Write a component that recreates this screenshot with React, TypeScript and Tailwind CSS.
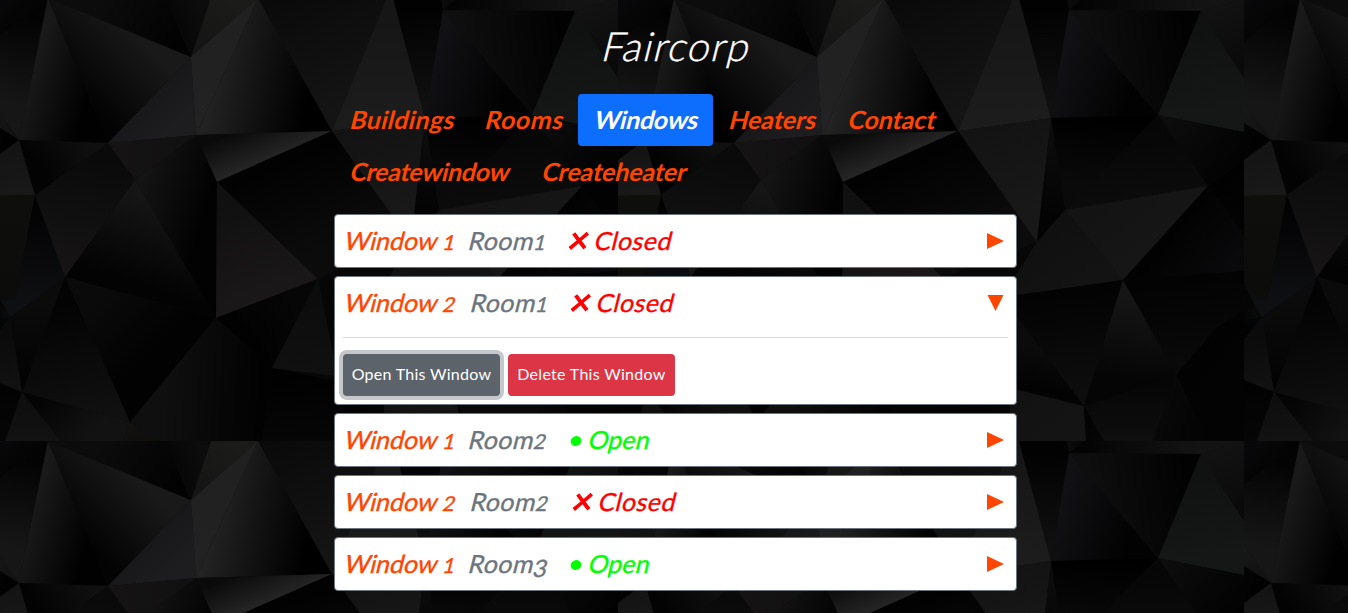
import React from "react";

type Facet = [points: string, from: string, to: string, x1: number, y1: number, x2: number, y2: number];

const TILE_W = 626;
const TILE_H = 443;

const facets: Facet[] = [
  ["-8,-2 48,-2 -8,42", "#08080a", "#040404", 0, 0, 20, 20],
  ["48,-2 -8,42 -8,103 19,140", "#030303", "#161616", 20, 15, -2, 100],
  ["-8,103 19,140 -8,123", "#181818", "#101010", -8, 105, 19, 138],
  ["-8,123 19,140 -8,160", "#040404", "#010101", -8, 125, 19, 140],
  ["-8,160 19,140 35,195 -8,196", "#141414", "#181818", 0, 150, 10, 195],
  ["-8,196 35,195 15,300 -1,300 -8,285", "#0e0e0c", "#0c0c0b", 0, 196, 0, 290],
  ["35,195 65,277 33,305 10,317 -1,300 15,300", "#020203", "#0e0f12", 35, 205, 30, 300],
  ["48,-2 19,140 108,143", "#191919", "#010101", 30, 80, 88, 98],
  ["48,-2 108,143 191,57", "#030303", "#191919", 82, 95, 140, 38],
  ["108,143 191,57 196,135", "#17171a", "#1d1d20", 150, 90, 180, 120],
  ["48,-2 191,57 165,-2", "#0c0c0c", "#020202", 100, 0, 175, 48],
  ["165,-2 191,57 211,-2", "#050505", "#0c0c0c", 168, 20, 200, 10],
  ["211,-2 191,57 258,-2", "#1b1b19", "#151515", 230, 0, 200, 45],
  ["258,-2 191,57 196,135", "#202020", "#222222", 230, 20, 195, 120],
  ["258,-2 196,135 332,131", "#222222", "#000000", 210, 100, 303, 120],
  ["258,-2 332,131 387,-2", "#0a0a0a", "#141414", 275, 0, 325, 115],
  ["19,140 108,143 35,195", "#101010", "#030303", 90, 143, 45, 175],
  ["108,143 135,180 65,277 35,195", "#0a0a0a", "#161414", 85, 155, 65, 270],
  ["108,143 196,135 135,180", "#151313", "#121112", 110, 145, 180, 140],
  ["196,135 217,182 216,318 135,180", "#151415", "#020202", 143, 175, 210, 195],
  ["135,180 216,318 65,277", "#151515", "#030303", 135, 195, 110, 275],
  ["196,135 332,131 217,182", "#0a0a0a", "#242424", 240, 130, 254, 164],
  ["332,131 217,182 318,279 411,242", "#020202", "#0b0b0b", 280, 165, 315, 250],
  ["217,182 318,279 216,318", "#111011", "#191717", 225, 205, 260, 290],
  ["65,277 216,318 130,422 75,300", "#0a0a0a", "#020202", 90, 305, 145, 360],
  ["65,277 75,300 130,422 22,392", "#030303", "#101010", 70, 300, 95, 415],
  ["65,277 22,392 10,317", "#0b0b0b", "#030303", 35, 300, 38, 380],
  ["10,317 -8,285 -8,320", "#0a0a0a", "#050505", 5, 315, -5, 310],
  ["10,317 -8,320 -8,340", "#020606", "#010303", 5, 320, -5, 330],
  ["10,317 22,392 -8,380 -8,340", "#0b0b0b", "#111111", 0, 340, 10, 385],
  ["-8,380 22,392 5,441 -8,441", "#020202", "#060606", 0, 385, 0, 440],
  ["22,392 5,441 61,441", "#0e0e0e", "#121212", 20, 400, 20, 440],
  ["22,392 61,441 123,441 130,422", "#040404", "#121212", 40, 400, 85, 440],
  ["130,422 123,441 155,441", "#14110f", "#100f0e", 130, 422, 135, 441],
  ["216,318 130,422 155,441 262,441 272,368", "#0f0f0f", "#020202", 165, 395, 260, 400],
  ["216,318 272,368 318,279", "#060606", "#020202", 290, 300, 245, 335],
  ["318,279 272,368 338,376", "#0c0c0c", "#101010", 310, 295, 300, 370],
  ["318,279 338,376 458,406 391,317 391,242", "#060606", "#020202", 350, 300, 380, 385],
  ["272,368 262,441 460,441 458,406", "#010101", "#060606", 300, 375, 310, 441],
  ["387,-2 332,131 425,118 393,-2", "#161616", "#1c1c1c", 375, 20, 380, 115],
  ["332,131 425,118 411,242", "#131313", "#181818", 370, 125, 400, 210],
  ["393,-2 425,118 443,10 441,-2", "#020202", "#101010", 420, 10, 425, 105],
  ["441,-2 443,10 458,-2", "#0c0c0c", "#080808", 442, 0, 450, 0],
  ["458,-2 443,10 575,11 618,-2", "#030303", "#131313", 450, 8, 570, 0],
  ["443,10 425,118 532,115", "#111115", "#020202", 430, 75, 503, 100],
  ["443,10 532,115 575,11", "#0e0e0e", "#020202", 465, 45, 560, 30],
  ["575,11 532,115 618,132 618,78", "#101211", "#151716", 575, 30, 590, 110],
  ["575,11 618,-2 618,78", "#121212", "#090909", 590, 10, 615, 70],
  ["425,118 532,115 439,210", "#000000", "#0a0a0a", 465, 118, 460, 185],
  ["532,115 439,210 582,186", "#060606", "#0b0b0b", 520, 125, 525, 195],
  ["532,115 582,186 618,160 618,132", "#0c0c0c", "#030303", 545, 120, 600, 165],
  ["582,186 618,160 618,235", "#010101", "#030303", 590, 180, 615, 220],
  ["425,118 439,210 411,242", "#0c0c0c", "#030303", 425, 130, 425, 220],
  ["439,210 582,186 497,280", "#131313", "#161616", 460, 215, 500, 270],
  ["439,210 497,280 391,295 384,285 411,242", "#101010", "#131313", 425, 230, 460, 285],
  ["582,186 618,235 618,271 497,280", "#020202", "#09090b", 550, 230, 600, 270],
  ["391,295 497,280 458,406 391,317", "#030303", "#0d0d0d", 440, 295, 450, 390],
  ["497,280 618,271 618,310 590,328 550,375", "#030303", "#090909", 540, 285, 550, 365],
  ["497,280 458,406 550,375", "#151515", "#050505", 497, 300, 490, 378],
  ["391,317 458,406 384,388 384,310", "#0b0b0b", "#030303", 400, 345, 395, 385],
  ["384,388 458,406 460,441 384,441", "#121212", "#141414", 400, 395, 430, 440],
  ["458,406 460,441 478,441", "#020202", "#050505", 459, 410, 470, 440],
  ["458,406 550,375 527,441 478,441", "#060606", "#0e0e0e", 500, 385, 500, 440],
  ["550,375 527,441 582,441", "#080808", "#040404", 535, 420, 570, 430],
  ["590,328 550,375 582,441 618,441 618,310", "#020202", "#030303", 560, 360, 615, 400],
];

function FacetBackdrop() {
  return (
    <svg className="absolute inset-0 h-full w-full" aria-hidden="true">
      <defs>
        {facets.map(([, from, to, x1, y1, x2, y2], i) => (
          <linearGradient key={i} id={`f${i}`} gradientUnits="userSpaceOnUse" x1={x1} y1={y1} x2={x2} y2={y2}>
            <stop offset="0" stopColor={from} />
            <stop offset="1" stopColor={to} />
          </linearGradient>
        ))}
        <clipPath id="tile-clip">
          <rect x="-8" y="-2" width={TILE_W} height={TILE_H} />
        </clipPath>
        <g id="tile" clipPath="url(#tile-clip)">
          <rect x="-8" y="-2" width={TILE_W} height={TILE_H} fill="#070707" />
          {facets.map(([points], i) => (
            <polygon key={i} points={points} fill={`url(#f${i})`} />
          ))}
        </g>
      </defs>
      {[0, 1].map((row) =>
        [0, 1, 2].map((col) => <use key={`${row}-${col}`} href="#tile" x={col * TILE_W} y={row * TILE_H} />),
      )}
    </svg>
  );
}

const slant = "inline-block whitespace-nowrap origin-[0_75%] -skew-x-[14deg]";

const links = [
  { label: "Buildings", box: "w-[135px]", track: "tracking-[0.3px]" },
  { label: "Rooms", box: "w-[109px]", track: "tracking-[0.5px]" },
  { label: "Windows", box: "w-[135px]", track: "tracking-[-0.3px]", active: true },
  { label: "Heaters", box: "w-[119px]", track: "tracking-[-0.1px]" },
  { label: "Contact", box: "w-[120px]", track: "tracking-[-0.1px]" },
  { label: "Createwindow", box: "w-[192px]", track: "tracking-[-0.3px]" },
  { label: "Createheater", box: "w-[178px]", track: "tracking-[-0.15px]" },
];

/* Old-style figure: 1 and 2 sit at x-height, 3 drops below the baseline. */
function Figure({ value }: { value: number }) {
  return value === 3 ? (
    <span className="relative top-[4px] text-[24px] leading-none tracking-normal">3</span>
  ) : (
    <span className="text-[20.5px] leading-none tracking-normal">{value}</span>
  );
}

function Cross() {
  return (
    <svg className="mt-px h-[20px] w-[22px]" viewBox="0 0 22 20" aria-hidden="true">
      <path
        d="M4.2 3.4 L7.2 1.2 L11.6 7 L18.6 0.8 L21 3.6 L13.6 9.8 L18.4 16 L15.4 18.6 L10.6 12.3 L3 18.9 L0.6 16 L8.6 9.4 Z"
        fill="#ff0000"
      />
    </svg>
  );
}

type Pane = { id: number; room: number; open: boolean; expanded?: boolean };

const panes: Pane[] = [
  { id: 1, room: 1, open: false },
  { id: 2, room: 1, open: false, expanded: true },
  { id: 1, room: 2, open: true },
  { id: 2, room: 2, open: false },
  { id: 1, room: 3, open: true },
];

function WindowCard({ id, room, open, expanded }: Pane) {
  return (
    <section className={`rounded border border-[#6c757d] bg-white px-2 ${expanded ? "h-[129px]" : "h-[54px]"}`}>
      <div className="flex h-[52px] items-center pb-[2px] text-[25px] leading-[38px] [-webkit-text-stroke:0.35px_currentColor]">
        <div className={`text-[#ff4500] ${id === 1 ? "w-[124px]" : "w-[126px]"}`}>
          <span className={`${slant} tracking-[-0.05px]`}>
            Window <Figure value={id} />
          </span>
        </div>
        <div className={`text-[#6c757d] ${room === 1 ? "w-[101px]" : "w-[103px]"}`}>
          <span className={`${slant} tracking-[0.45px]`}>
            Room
            <Figure value={room} />
          </span>
        </div>
        {open ? (
          <div className="flex items-center text-[#00ff00]">
            <svg className="mt-[4px] mr-[5px] h-3 w-3" viewBox="0 0 12 12" aria-hidden="true">
              <ellipse cx="6" cy="6" rx="5.4" ry="4.8" transform="rotate(-25 6 6)" fill="#00ff00" />
            </svg>
            <span className={`${slant} tracking-[0.1px]`}>Open</span>
          </div>
        ) : (
          <div className="flex items-center text-[#ff0000]">
            <Cross />
            <span className={`${slant} ml-[3px] tracking-[0.45px]`}>Closed</span>
          </div>
        )}
        <svg className="mt-[2px] mr-[4px] ml-auto h-[18px] w-[17px]" viewBox="0 0 17 18" aria-hidden="true">
          <path d={expanded ? "M0.5 1 H16.5 L8.5 17 Z" : "M0 1 V17 L17 9 Z"} fill="#ff4500" />
        </svg>
      </div>
      {expanded && (
        <>
          <div className="mt-2 h-px bg-[#ffd0bf]" />
          <div className="mt-4 flex gap-2 text-[16px] text-white">
            <button className="h-[42px] w-[157px] rounded bg-[#5c636a] pb-[3px] tracking-[0.28px] whitespace-nowrap ring-4 ring-[#c4c8cb]">
              Open This Window
            </button>
            <button className="h-[42px] w-[167px] rounded bg-[#dc3545] pb-[3px] tracking-[0.3px] whitespace-nowrap">
              Delete This Window
            </button>
          </div>
        </>
      )}
    </section>
  );
}

export default function App() {
  return (
    <div className="relative h-[613px] w-full overflow-hidden bg-black font-['Lato',sans-serif]">
      <FacetBackdrop />
      <main className="relative ml-[334px] w-[683px]">
        <h1 className="flex h-[94px] items-center justify-center pb-[3px] text-[40px] leading-none font-light tracking-[1.3px] text-white [-webkit-text-stroke:0.4px_currentColor]">
          <span className={slant}>Faircorp</span>
        </h1>
        <nav className="flex h-[120px] flex-wrap content-start text-[25px] leading-[36px] font-bold">
          {links.map(({ label, box, track, active }) => (
            <a
              key={label}
              className={`h-[52px] pt-[7px] pl-[15px] ${box} ${active ? "rounded bg-[#0d6efd] text-white" : "text-[#ff4500]"}`}
            >
              <span className={`${slant} ${track}`}>{label}</span>
            </a>
          ))}
        </nav>
        <div className="flex flex-col gap-2">
          {panes.map((pane, i) => (
            <WindowCard key={i} {...pane} />
          ))}
        </div>
      </main>
    </div>
  );
}
